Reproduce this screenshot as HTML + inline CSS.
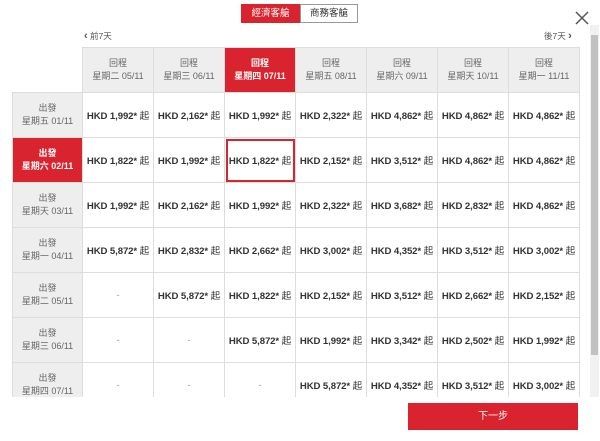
<!DOCTYPE html>
<html><head><meta charset="utf-8"><style>
*{margin:0;padding:0;box-sizing:border-box}
body{width:600px;height:441px;background:#fff;font-family:"Liberation Sans","Noto Sans CJK TC",sans-serif;position:relative;overflow:hidden;color:#333}
.tg{position:absolute;top:4px;height:19px;font-size:9.5px;line-height:17px;text-align:center}
.a{left:241px;width:59px;background:#d9232e;color:#fff;border:1px solid #d9232e}
.b{left:300px;width:58px;background:#fff;color:#333;border:1px solid #999}
.wrap{position:absolute;left:12px;top:47px;width:568px;height:350px;overflow:hidden}
table{border-collapse:collapse;table-layout:fixed}
td{border:1px solid #ddd;text-align:center;font-size:9.6px;font-weight:bold;height:45px;padding:0;white-space:nowrap;color:#333;letter-spacing:-0.1px}
td i{font-style:normal;font-weight:normal}
td.h{background:#eee;font-weight:normal;font-size:9px;color:#666;line-height:13px;letter-spacing:0}
td.r{background:#d9232e;color:#fff;font-weight:bold;font-size:9px;line-height:13px;letter-spacing:0}
td.e{border-top:0;border-left:0;background:#fff}
td.sel{outline:2px solid #d9232e;outline-offset:-3px}
td.d{font-weight:normal;color:#999}
.sm{position:absolute;font-size:8.5px;color:#555}
</style></head><body>
<div class="tg a">經濟客艙</div><div class="tg b">商務客艙</div>
<svg style="position:absolute;left:575px;top:11px" width="14" height="14"><path d="M1 1L13 13M13 1L1 13" stroke="#555" stroke-width="1.5"/></svg>
<div class="sm" style="left:84px;top:30px"><b style="font-size:11px">‹</b> 前7天</div>
<div class="sm" style="left:544px;top:30px">後7天 <b style="font-size:11px">›</b></div>
<div class="sm" style="left:17px;top:75px"><b>^</b> 前7天</div>
<div class="wrap"><table>
<colgroup><col style="width:70px"><col style="width:71px"><col style="width:71px"><col style="width:71px"><col style="width:71px"><col style="width:71px"><col style="width:71px"><col style="width:71px"></colgroup>
<tr><td class="e"></td><td class="h">回程<br>星期二 05/11</td><td class="h">回程<br>星期三 06/11</td><td class="r">回程<br>星期四 07/11</td><td class="h">回程<br>星期五 08/11</td><td class="h">回程<br>星期六 09/11</td><td class="h">回程<br>星期天 10/11</td><td class="h">回程<br>星期一 11/11</td></tr>
<tr><td class="h">出發<br>星期五 01/11</td><td>HKD 1,992* <i>起</i></td><td>HKD 2,162* <i>起</i></td><td>HKD 1,992* <i>起</i></td><td>HKD 2,322* <i>起</i></td><td>HKD 4,862* <i>起</i></td><td>HKD 4,862* <i>起</i></td><td>HKD 4,862* <i>起</i></td></tr>
<tr><td class="r">出發<br>星期六 02/11</td><td>HKD 1,822* <i>起</i></td><td>HKD 1,992* <i>起</i></td><td class="sel">HKD 1,822* <i>起</i></td><td>HKD 2,152* <i>起</i></td><td>HKD 3,512* <i>起</i></td><td>HKD 4,862* <i>起</i></td><td>HKD 4,862* <i>起</i></td></tr>
<tr><td class="h">出發<br>星期天 03/11</td><td>HKD 1,992* <i>起</i></td><td>HKD 2,162* <i>起</i></td><td>HKD 1,992* <i>起</i></td><td>HKD 2,322* <i>起</i></td><td>HKD 3,682* <i>起</i></td><td>HKD 2,832* <i>起</i></td><td>HKD 4,862* <i>起</i></td></tr>
<tr><td class="h">出發<br>星期一 04/11</td><td>HKD 5,872* <i>起</i></td><td>HKD 2,832* <i>起</i></td><td>HKD 2,662* <i>起</i></td><td>HKD 3,002* <i>起</i></td><td>HKD 4,352* <i>起</i></td><td>HKD 3,512* <i>起</i></td><td>HKD 3,002* <i>起</i></td></tr>
<tr><td class="h">出發<br>星期二 05/11</td><td class="d">-</td><td>HKD 5,872* <i>起</i></td><td>HKD 1,822* <i>起</i></td><td>HKD 2,152* <i>起</i></td><td>HKD 3,512* <i>起</i></td><td>HKD 2,662* <i>起</i></td><td>HKD 2,152* <i>起</i></td></tr>
<tr><td class="h">出發<br>星期三 06/11</td><td class="d">-</td><td class="d">-</td><td>HKD 5,872* <i>起</i></td><td>HKD 1,992* <i>起</i></td><td>HKD 3,342* <i>起</i></td><td>HKD 2,502* <i>起</i></td><td>HKD 1,992* <i>起</i></td></tr>
<tr><td class="h">出發<br>星期四 07/11</td><td class="d">-</td><td class="d">-</td><td class="d">-</td><td>HKD 5,872* <i>起</i></td><td>HKD 4,352* <i>起</i></td><td>HKD 3,512* <i>起</i></td><td>HKD 3,002* <i>起</i></td></tr>
</table></div>
<div style="position:absolute;left:590px;top:25px;width:9px;height:372px;background:#f1f1f1"></div>
<div style="position:absolute;left:591px;top:35px;width:7px;height:320px;background:#c1c1c1"></div>
<div style="position:absolute;left:408px;top:403px;width:170px;height:27px;background:#d9232e;color:#fff;font-size:10px;line-height:27px;text-align:center">下一步</div>
</body></html>
